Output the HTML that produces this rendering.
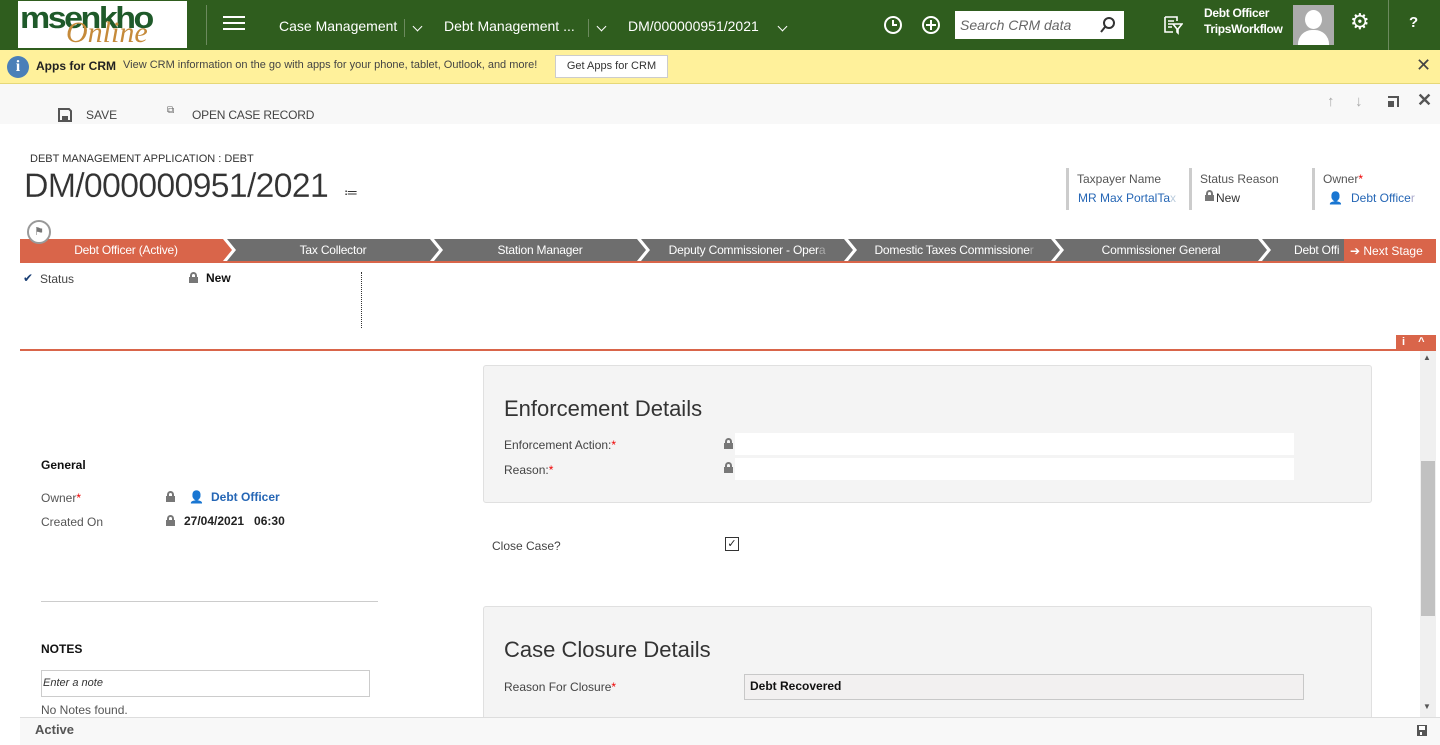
<!DOCTYPE html>
<html><head><meta charset="utf-8"><style>
*{box-sizing:border-box;margin:0;padding:0}
body{width:1440px;height:745px;overflow:hidden;font-family:"Segoe UI","Liberation Sans",sans-serif;font-size:12px;color:#444;background:#fff;position:relative}
.a{position:absolute;white-space:nowrap}
.top{position:absolute;left:0;top:0;width:1440px;height:50px;background:#2f5d1e}
.top .t{color:#fff;font-size:14px}
.yb{position:absolute;left:0;top:50px;width:1440px;height:34px;background:#fff19b;border-bottom:1px solid #e6d878}
.cmd{position:absolute;left:0;top:84px;width:1440px;height:40px;background:#f8f8f8}
.stage{position:absolute;top:239px;height:22px;background:#6e6e6e;color:#fff;font-size:12px;line-height:22px;text-align:center;letter-spacing:-0.2px;clip-path:polygon(0 0,calc(100% - 9px) 0,100% 50%,calc(100% - 9px) 100%,0 100%,9px 50%)}
.lock{display:inline-block;width:9px;height:11px;position:absolute}
.lock:before{content:"";position:absolute;left:1px;top:0;width:7px;height:6px;border:2px solid #777;border-bottom:none;border-radius:4px 4px 0 0;box-sizing:border-box}
.lock:after{content:"";position:absolute;left:0;top:5px;width:9px;height:6px;background:#777}
.sec{position:absolute;background:#f4f4f4;border:1px solid #e0e0e0;border-radius:3px}
.req{color:#e00}
.chev{position:absolute;width:7px;height:7px;border-right:1.5px solid #fff;border-bottom:1.5px solid #fff;transform:rotate(45deg)}
</style></head><body>
<div class="top">
 <div class="a" style="left:18px;top:1px;width:169px;height:47px;background:#fff"></div>
 <div class="a" style="left:20px;top:-2px;font:bold 34px/40px 'Liberation Sans',sans-serif;color:#1f5a2a;letter-spacing:-2.5px;transform:scaleY(0.9)">msenkho</div>
 <div class="a" style="left:66px;top:18px;font:italic 30px/30px 'Liberation Serif',serif;color:#c58a3a">Online</div>
 <div class="a" style="left:206px;top:5px;width:1px;height:40px;background:#6c8a5e"></div>
 <div class="a" style="left:223px;top:16px;width:22px;height:2px;background:#fff;box-shadow:0 6px 0 #fff,0 12px 0 #fff"></div>
 <div class="a t" style="left:279px;top:18px">Case Management</div>
 <div class="a" style="left:404px;top:19px;width:1px;height:18px;background:#6c8a5e"></div>
 <div class="chev" style="left:414px;top:23px"></div>
 <div class="a t" style="left:444px;top:18px">Debt Management ...</div>
 <div class="a" style="left:588px;top:19px;width:1px;height:18px;background:#6c8a5e"></div>
 <div class="chev" style="left:598px;top:23px"></div>
 <div class="a t" style="left:628px;top:18px">DM/000000951/2021</div>
 <div class="chev" style="left:779px;top:23px"></div>
 <svg class="a" style="left:882px;top:14px" width="22" height="22" viewBox="0 0 22 22"><circle cx="11" cy="11" r="8" fill="none" stroke="#fff" stroke-width="2"/><path d="M11 6v5h4" fill="none" stroke="#fff" stroke-width="2"/></svg>
 <svg class="a" style="left:920px;top:14px" width="22" height="22" viewBox="0 0 22 22"><circle cx="11" cy="11" r="8" fill="none" stroke="#fff" stroke-width="2"/><path d="M11 6v10M6 11h10" stroke="#fff" stroke-width="2"/></svg>
 <div class="a" style="left:955px;top:11px;width:169px;height:28px;background:#fff"></div>
 <div class="a" style="left:960px;top:17px;font-style:italic;font-size:14px;color:#666">Search CRM data</div>
 <svg class="a" style="left:1099px;top:16px" width="18" height="18" viewBox="0 0 18 18"><circle cx="10" cy="7" r="5" fill="none" stroke="#333" stroke-width="2"/><path d="M6 11l-4 5" stroke="#333" stroke-width="2"/></svg>
 <svg class="a" style="left:1163px;top:15px" width="20" height="20" viewBox="0 0 20 20"><path d="M2 2h12v4M2 2v15h8M5 6h6M5 9h6M5 12h4M10 9h9l-4 5v4l-1-1v-3z" fill="none" stroke="#fff" stroke-width="1.6"/></svg>
 <div class="a" style="left:1204px;top:5px;color:#fff;font-weight:bold;font-size:12px;line-height:16px;letter-spacing:-0.3px">Debt Officer<br>TripsWorkflow</div>
 <div class="a" style="left:1293px;top:5px;width:41px;height:40px;background:#ababab;overflow:hidden"><div class="a" style="left:12px;top:5px;width:17px;height:19px;background:#fff;border-radius:50%"></div><div class="a" style="left:5px;top:25px;width:31px;height:20px;background:#fff;border-radius:14px 14px 0 0"></div></div>
 <div class="a" style="left:1350px;top:9px;color:#fff;font-size:22px">⚙</div>
 <div class="a" style="left:1388px;top:0;width:1px;height:50px;background:#6c8a5e"></div>
 <div class="a" style="left:1409px;top:14px;color:#fff;font-weight:bold;font-size:15px">?</div>
</div>
<div class="yb">
 <div class="a" style="left:7px;top:6px;width:22px;height:22px;border-radius:50%;background:#4a7fb8;color:#fff;text-align:center;font:bold 16px/22px 'Liberation Serif',serif">i</div>
 <div class="a" style="left:36px;top:9px;font-weight:bold;color:#222">Apps for CRM</div>
 <div class="a" style="left:123px;top:9px;font-size:11px;color:#444">View CRM information on the go with apps for your phone, tablet, Outlook, and more!</div>
 <div class="a" style="left:555px;top:5px;width:113px;height:23px;background:#fff;border:1px solid #ccc;font-size:11px;color:#333;text-align:center;line-height:21px">Get Apps for CRM</div>
 <div class="a" style="left:1416px;top:5px;font-size:18px;color:#444">✕</div>
</div>
<div class="cmd">
 <svg class="a" style="left:58px;top:24px" width="14" height="14" viewBox="0 0 14 14"><path d="M1 1h10l2 2v10H1z" fill="none" stroke="#555" stroke-width="2"/><rect x="4" y="8" width="6" height="5" fill="#555"/></svg>
 <div class="a" style="left:86px;top:24px;color:#444">SAVE</div>
 <div class="a" style="left:167px;top:21px;font-size:10px;color:#666">⧉</div>
 <div class="a" style="left:192px;top:24px;color:#444;letter-spacing:-0.2px">OPEN CASE RECORD</div>
 <div class="a" style="left:1327px;top:9px;color:#aaa;font-size:15px">↑</div>
 <div class="a" style="left:1355px;top:9px;color:#aaa;font-size:15px">↓</div>
 <div class="a" style="left:1388px;top:12px;width:11px;height:11px;border-top:2px solid #555;border-right:2px solid #555"></div>
 <div class="a" style="left:1388px;top:17px;width:6px;height:6px;background:#555"></div>
 <div class="a" style="left:1417px;top:6px;color:#555;font-size:18px;font-weight:bold">✕</div>
</div>
<div class="a" style="left:30px;top:153px;font-size:11px;color:#333">DEBT MANAGEMENT APPLICATION : DEBT</div>
<div class="a" style="left:24px;top:167px;font-size:34px;color:#333;letter-spacing:-0.8px;-webkit-text-stroke:0.2px #fff">DM/000000951/2021</div>
<div class="a" style="left:344px;top:184px;font-size:14px;color:#333">≔</div>
<div class="a" style="left:1066px;top:168px;width:3px;height:42px;background:#ccc"></div>
<div class="a" style="left:1077px;top:172px;color:#555">Taxpayer Name</div>
<div class="a" style="left:1078px;top:191px;color:#2566b5">MR Max PortalTa<span style="color:#bcd">x</span></div>
<div class="a" style="left:1189px;top:168px;width:3px;height:42px;background:#ccc"></div>
<div class="a" style="left:1200px;top:172px;color:#555">Status Reason</div>
<div class="lock" style="left:1205px;top:190px"></div><div class="a" style="left:1216px;top:191px;color:#333">New</div>
<div class="a" style="left:1312px;top:168px;width:3px;height:42px;background:#ccc"></div>
<div class="a" style="left:1323px;top:172px;color:#555">Owner<span class="req">*</span></div>
<div class="a" style="left:1328px;top:191px;color:#666">👤</div>
<div class="a" style="left:1351px;top:191px;color:#2566b5">Debt Office<span style="color:#aac">r</span></div>
<div class="a" style="left:27px;top:220px;width:24px;height:24px;border-radius:50%;border:2px solid #999;background:#fff;z-index:2;text-align:center;font-size:11px;line-height:20px;color:#777">⚑</div>
<div class="stage" style="left:20px;width:212px;background:#d9654a;clip-path:polygon(0 0,calc(100% - 9px) 0,100% 50%,calc(100% - 9px) 100%,0 100%)">Debt Officer (Active)</div>
<div class="stage" style="left:227px;width:212px">Tax Collector</div>
<div class="stage" style="left:434px;width:212px">Station Manager</div>
<div class="stage" style="left:641px;width:212px">Deputy Commissioner - Oper<span style="color:#aaa">a</span></div>
<div class="stage" style="left:848px;width:212px">Domestic Taxes Commissione<span style="color:#aaa">r</span></div>
<div class="stage" style="left:1055px;width:212px">Commissioner General</div>
<div class="stage" style="left:1262px;width:82px;clip-path:polygon(0 0,100% 0,100% 100%,0 100%,9px 50%);text-align:left;padding-left:32px">Debt Offi</div>
<div class="a" style="left:1344px;top:239px;width:92px;height:24px;background:#d9654a;color:#fff;font-size:12px;line-height:24px;padding-left:6px">➔ Next Stage</div>
<div class="a" style="left:20px;top:261px;width:1416px;height:2px;background:#d9654a"></div>
<div class="a" style="left:23px;top:271px;color:#1a3f75">✔</div>
<div class="a" style="left:40px;top:272px;color:#444">Status</div>
<div class="lock" style="left:189px;top:272px"></div>
<div class="a" style="left:206px;top:271px;font-weight:bold;color:#111">New</div>
<div class="a" style="left:361px;top:272px;height:56px;border-left:1px dotted #333"></div>
<div class="a" style="left:20px;top:349px;width:1416px;height:2px;background:#d9654a"></div>
<div class="a" style="left:1396px;top:335px;width:40px;height:15px;background:#d9654a;color:#fff;font-size:11px;font-weight:bold;line-height:15px"><span style="margin-left:6px">i</span><span style="margin-left:13px">^</span></div>
<div class="a" style="left:1420px;top:351px;width:16px;height:366px;background:#f0f0f0"></div>
<div class="a" style="left:1421px;top:461px;width:14px;height:155px;background:#c1c1c1"></div>
<div class="a" style="left:1423px;top:353px;font-size:8px;color:#555">▲</div>
<div class="a" style="left:1423px;top:702px;font-size:8px;color:#555">▼</div>
<div class="a" style="left:41px;top:458px;font-weight:bold;color:#111">General</div>
<div class="a" style="left:41px;top:491px;color:#555">Owner<span class="req">*</span></div>
<div class="lock" style="left:166px;top:491px"></div>
<div class="a" style="left:189px;top:490px;color:#666">👤</div>
<div class="a" style="left:211px;top:490px;font-weight:bold;color:#2566b5">Debt Officer</div>
<div class="a" style="left:41px;top:515px;color:#555">Created On</div>
<div class="lock" style="left:166px;top:515px"></div>
<div class="a" style="left:184px;top:514px;font-weight:bold;color:#222">27/04/2021 &nbsp; 06:30</div>
<div class="a" style="left:41px;top:601px;width:337px;height:1px;background:#ccc"></div>
<div class="a" style="left:41px;top:642px;font-weight:bold;color:#111">NOTES</div>
<div class="a" style="left:41px;top:670px;width:329px;height:27px;border:1px solid #ccc;background:#fff;font-style:italic;font-size:11px;color:#333;padding:6px 1px">Enter a note</div>
<div class="a" style="left:41px;top:703px;color:#555">No Notes found.</div>
<div class="sec" style="left:483px;top:365px;width:889px;height:138px">
 <div class="a" style="left:20px;top:30px;font-size:22px;color:#333">Enforcement Details</div>
 <div class="a" style="left:20px;top:72px;color:#444">Enforcement Action:<span class="req">*</span></div>
 <div class="lock" style="left:240px;top:72px"></div>
 <div class="a" style="left:251px;top:67px;width:559px;height:22px;background:#fff"></div>
 <div class="a" style="left:20px;top:97px;color:#444">Reason:<span class="req">*</span></div>
 <div class="lock" style="left:240px;top:96px"></div>
 <div class="a" style="left:251px;top:92px;width:559px;height:22px;background:#fff"></div>
</div>
<div class="a" style="left:492px;top:539px;color:#444">Close Case?</div>
<div class="a" style="left:725px;top:537px;width:14px;height:14px;border:1px solid #333;font-size:11px;line-height:12px;text-align:center;color:#222">✓</div>
<div class="sec" style="left:483px;top:606px;width:889px;height:130px">
 <div class="a" style="left:20px;top:30px;font-size:22px;color:#333">Case Closure Details</div>
 <div class="a" style="left:20px;top:73px;color:#444">Reason For Closure<span class="req">*</span></div>
 <div class="a" style="left:260px;top:67px;width:560px;height:26px;background:#f2f0f0;border:1px solid #c8c8c8;font-weight:bold;color:#111;padding:4px 5px">Debt Recovered</div>
</div>
<div class="a" style="left:20px;top:717px;width:1420px;height:28px;background:#f8f8f8;border-top:1px solid #ddd"></div>
<div class="a" style="left:35px;top:722px;font-weight:bold;color:#555;font-size:13px">Active</div>
<svg class="a" style="left:1417px;top:725px" width="10" height="11" viewBox="0 0 10 11"><path d="M0 0h10v11H0z" fill="#555"/><rect x="2" y="1" width="6" height="4" fill="#fff"/><rect x="3" y="7" width="2" height="3" fill="#fff"/></svg>
</body></html>
